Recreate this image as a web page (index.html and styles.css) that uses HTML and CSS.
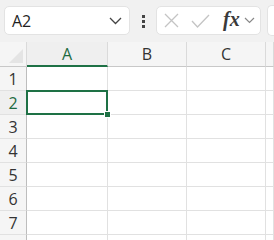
FILE: index.html
```html
<!DOCTYPE html>
<html lang="en">
<head>
    <meta charset="UTF-8">
    <title>Sheet</title>
    <link rel="stylesheet" href="styles.css">
</head>
<body>

<div class="toolbar">
    <div class="name-box">
        <span class="name-value">A2</span>
        <svg class="chevron" width="13" height="8" viewBox="0 0 13 8"><path d="M1 1 L6.5 6.5 L12 1" fill="none" stroke="#444" stroke-width="1.3"/></svg>
    </div>
    <div class="grip">
        <span></span><span></span><span></span>
    </div>
    <div class="formula-box">
        <svg width="15" height="15" viewBox="0 0 15 15"><path d="M1 1 L14 14 M14 1 L1 14" stroke="#c4c4c4" stroke-width="1.3"/></svg>
        <svg width="19" height="14" viewBox="0 0 19 14"><path d="M1 7 L6.5 13 L18 1" fill="none" stroke="#c4c4c4" stroke-width="1.3"/></svg>
        <span class="fx">fx</span>
        <svg class="fx-chevron" width="11" height="7" viewBox="0 0 11 7"><path d="M1 1 L5.5 5.5 L10 1" fill="none" stroke="#888" stroke-width="1.2"/></svg>
    </div>
    <div class="formula-input"></div>
</div>

<div class="sheet">
    <div class="corner"><span class="corner-tri"></span></div>
    <div class="col-head active">A</div>
    <div class="col-head">B</div>
    <div class="col-head">C</div>
    <div class="col-head"></div>

    <div class="row-head">1</div><div class="cell"></div><div class="cell"></div><div class="cell"></div><div class="cell"></div>
    <div class="row-head active">2</div><div class="cell selected"><span class="handle"></span></div><div class="cell"></div><div class="cell"></div><div class="cell"></div>
    <div class="row-head">3</div><div class="cell"></div><div class="cell"></div><div class="cell"></div><div class="cell"></div>
    <div class="row-head">4</div><div class="cell"></div><div class="cell"></div><div class="cell"></div><div class="cell"></div>
    <div class="row-head">5</div><div class="cell"></div><div class="cell"></div><div class="cell"></div><div class="cell"></div>
    <div class="row-head">6</div><div class="cell"></div><div class="cell"></div><div class="cell"></div><div class="cell"></div>
    <div class="row-head">7</div><div class="cell"></div><div class="cell"></div><div class="cell"></div><div class="cell"></div>
    <div class="row-head"></div><div class="cell"></div><div class="cell"></div><div class="cell"></div><div class="cell"></div>
</div>

</body>
</html>
```

FILE: styles.css
```css
body {
    margin: 0;
    height: 240px;
    background-color: #ffffff;
    font-family: "Open Sans", "Noto Sans", sans-serif;
    color: #333333;
    overflow: hidden;
}

.toolbar {
    display: flex;
    align-items: center;
    height: 42px;
    padding: 0 0 0 4px;
    background-color: #f1f1f1;
    box-sizing: border-box;
    overflow: hidden;
}

.name-box {
    display: flex;
    align-items: center;
    justify-content: space-between;
    flex: none;
    width: 126px;
    height: 29px;
    padding: 0 7px 0 7px;
    box-sizing: border-box;
    background-color: #ffffff;
    border: 1px solid #e3e3e3;
    border-radius: 5px;
    margin-top: -1px;
}

.name-value {
    font-size: 16px;
    color: #1f1f1f;
}

.grip {
    display: flex;
    flex-direction: column;
    gap: 2px;
    margin: 0 11px 0 12px;
}

.grip span {
    width: 3px;
    height: 3px;
    background-color: #444444;
}

.formula-box {
    display: flex;
    align-items: center;
    flex: none;
    width: 105px;
    height: 29px;
    padding-left: 7px;
    box-sizing: border-box;
    background-color: #ffffff;
    border: 1px solid #e3e3e3;
    border-radius: 5px;
    margin-top: -1px;
    gap: 12px;
}

.fx {
    font-family: "Liberation Serif", serif;
    font-style: italic;
    font-weight: bold;
    font-size: 20px;
    line-height: 1;
    color: #3a3a3a;
    margin-left: 1px;
    margin-top: -3px;
}

.fx-chevron {
    margin-left: -8px;
}

.formula-input {
    flex: 1;
    height: 29px;
    margin-left: 6px;
    margin-top: -1px;
    background-color: #ffffff;
    border: 1px solid #e3e3e3;
    border-right: none;
    border-radius: 5px 0 0 5px;
}

.sheet {
    display: grid;
    grid-template-columns: 27px 81px 79px 79px 1fr;
    grid-template-rows: 25px repeat(8, 24px);
    height: 198px;
    overflow: hidden;
    background-color: #ffffff;
}

.corner {
    position: relative;
    background-color: #f5f5f5;
    border-right: 1px solid #dadada;
    border-bottom: 1px solid #c8c8c8;
}

.corner-tri {
    position: absolute;
    right: 3px;
    bottom: 3px;
    width: 0;
    height: 0;
    border-left: 14px solid transparent;
    border-bottom: 14px solid #e4e4e4;
}

.col-head {
    display: flex;
    align-items: center;
    justify-content: center;
    background-color: #f5f5f5;
    border-right: 1px solid #dadada;
    border-bottom: 1px solid #c8c8c8;
    font-size: 16px;
    color: #333333;
}

.col-head.active {
    color: #1e6b41;
    border-bottom: 2px solid #1e7145;
    background-color: #efefef;
}

.row-head {
    display: flex;
    align-items: center;
    justify-content: center;
    background-color: #f5f5f5;
    border-right: 1px solid #bdbdbd;
    border-bottom: 1px solid #e1e1e1;
    font-size: 16px;
    color: #333333;
}

.row-head.active {
    color: #1e6b41;
    background-color: #efefef;
}

.cell {
    border-right: 1px solid #e1e1e1;
    border-bottom: 1px solid #e1e1e1;
}

.selected {
    position: relative;
    border: none;
    outline: 2px solid #1e7145;
    outline-offset: -2px;
    margin: -1px 0 0 -1px;
}

.handle {
    position: absolute;
    right: -3px;
    bottom: -3px;
    width: 5px;
    height: 5px;
    background-color: #1e7145;
    border: 1px solid #ffffff;
}
```
